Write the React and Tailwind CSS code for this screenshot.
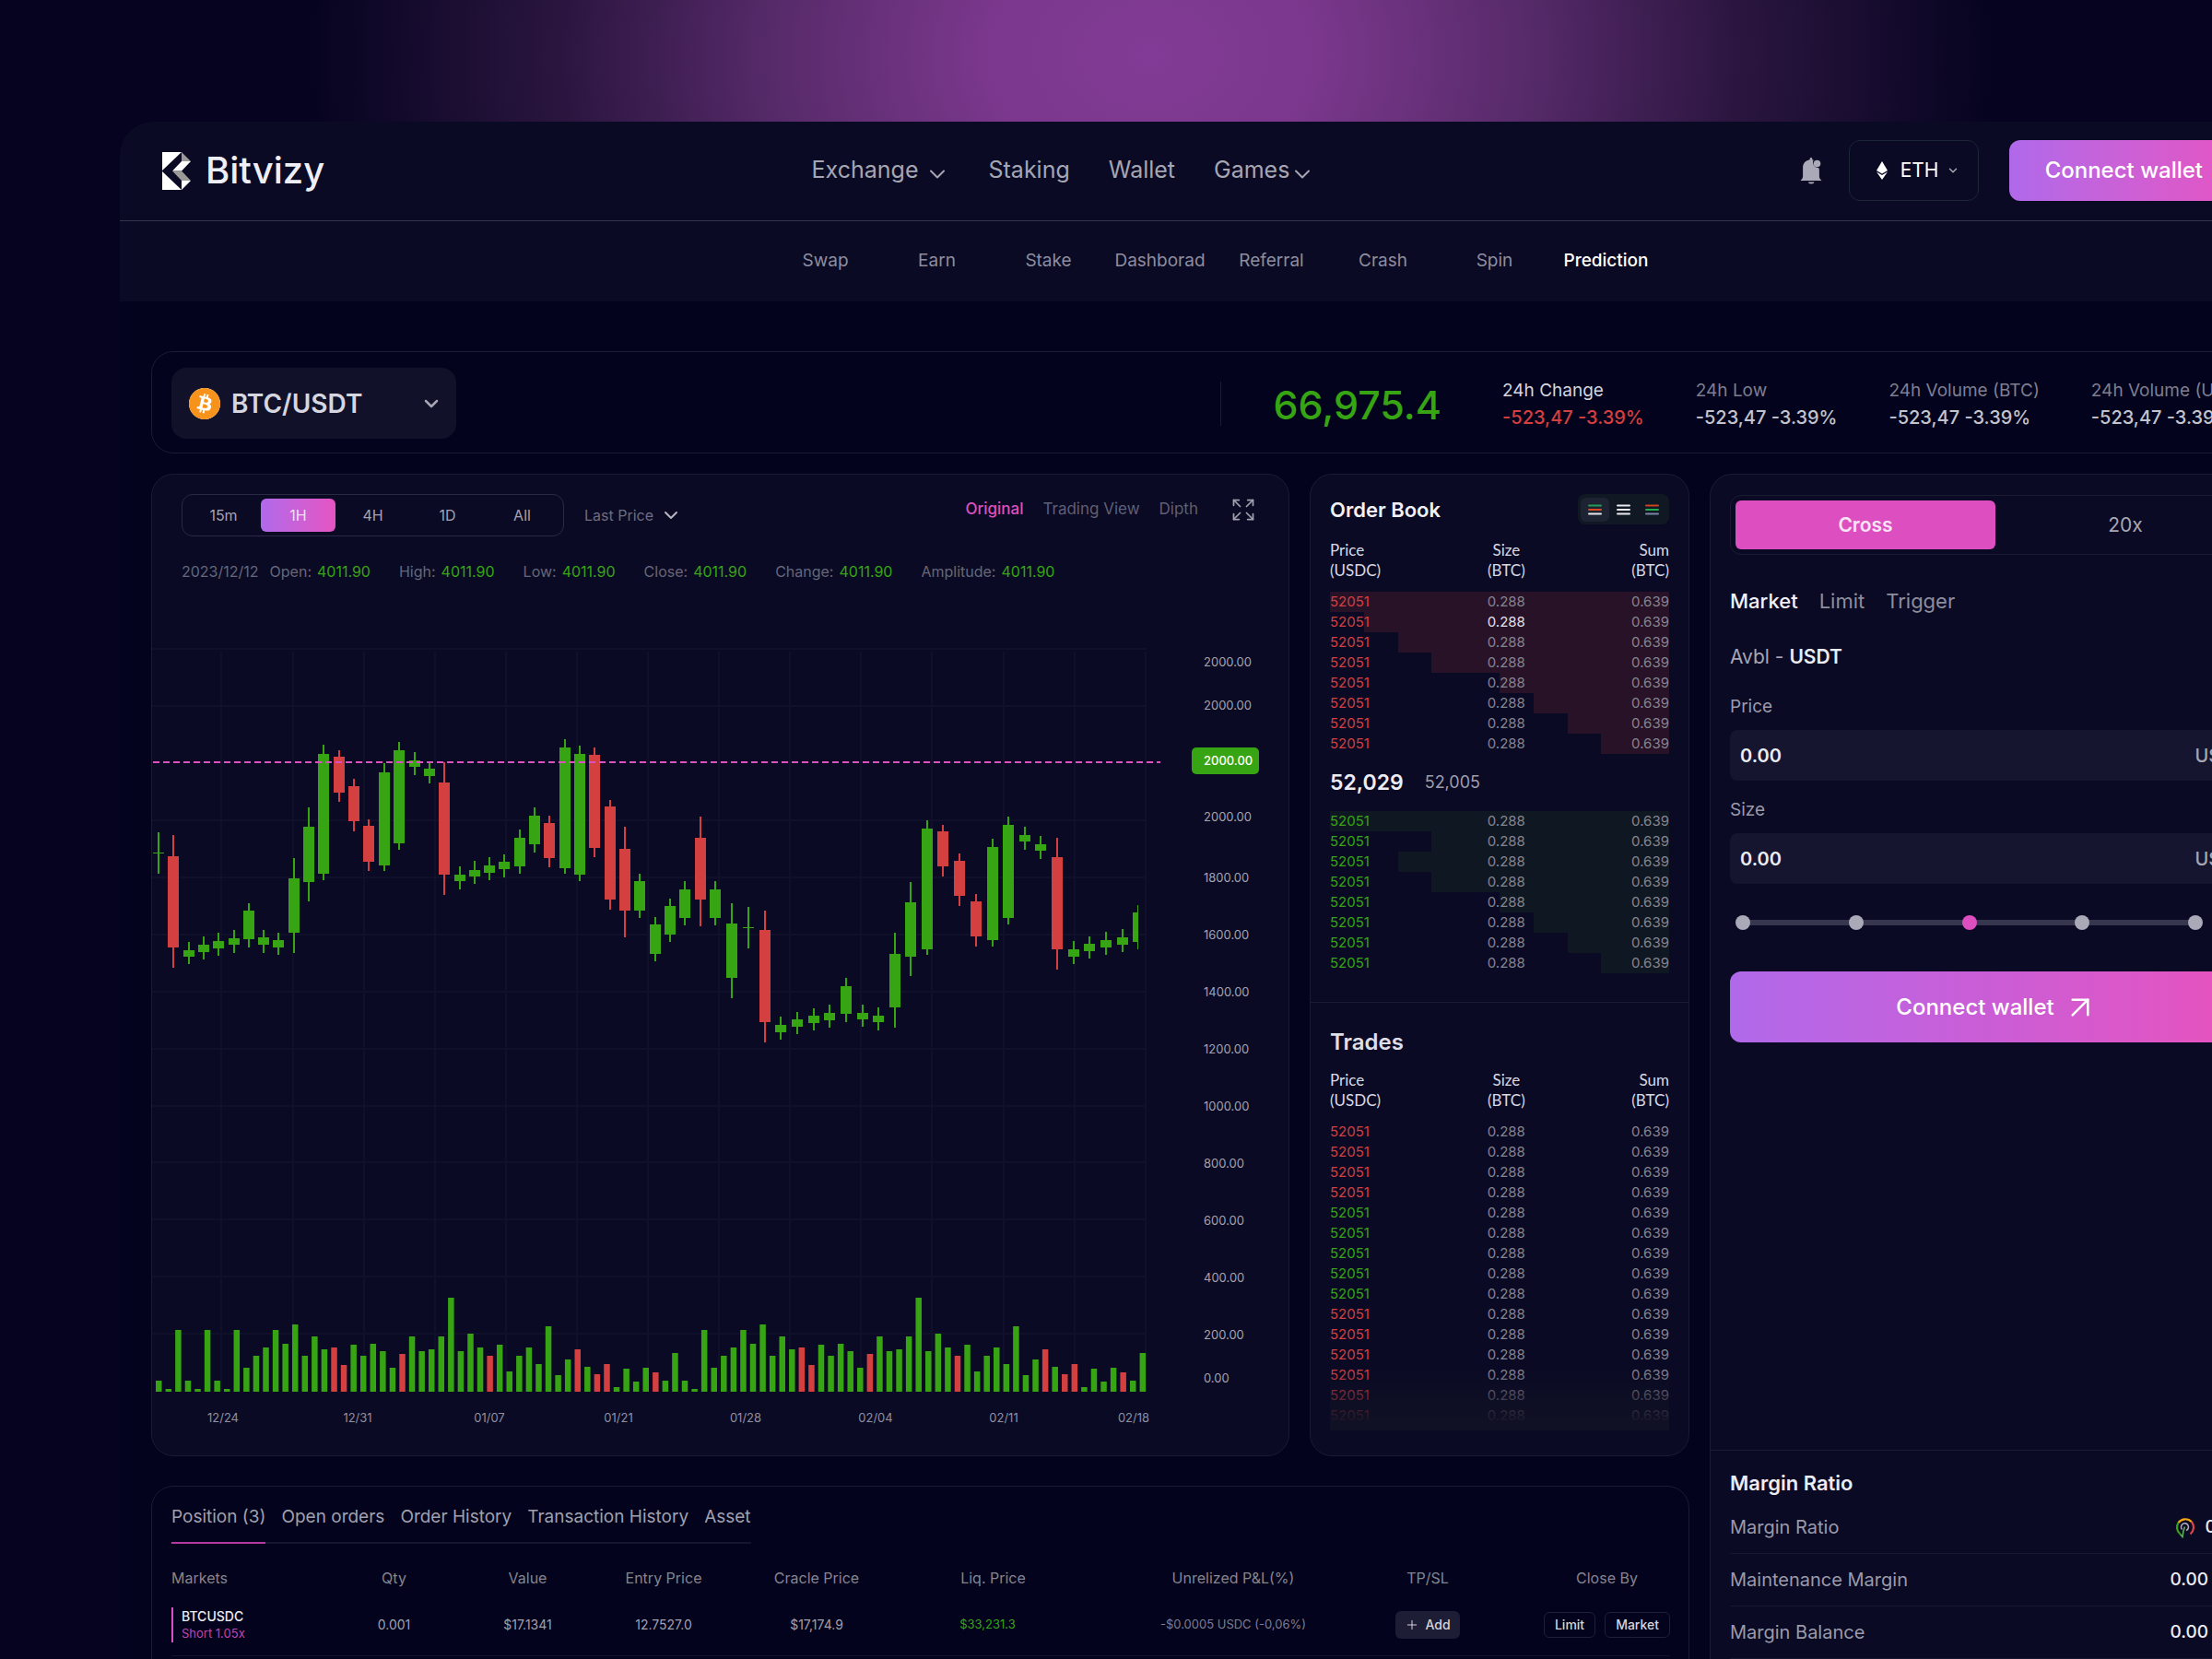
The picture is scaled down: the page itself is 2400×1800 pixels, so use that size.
import { ArrowUpRight, ChevronDown, Expand, Plus } from "lucide-react";
import { SiBitcoin } from "react-icons/si";

const UP = "#37a513";
const DOWN = "#d43f3f";

// Each candle: [x, direction, high, bodyTop, bodyBottom, low]
const CANDLES = [
  [7, 1, 199, 221, 222, 244], [23, 0, 202, 225, 324, 346], [40, 1, 318, 327, 334, 342],
  [56, 1, 312, 321, 329, 337], [72, 1, 308, 317, 325, 333], [89, 1, 305, 314, 321, 330],
  [105, 1, 276, 284, 315, 324], [121, 1, 305, 313, 321, 330], [137, 1, 308, 316, 324, 332],
  [154, 1, 227, 249, 308, 330], [170, 1, 172, 193, 253, 274], [186, 1, 104, 114, 244, 251],
  [203, 0, 110, 117, 156, 166], [219, 0, 141, 149, 187, 198], [235, 0, 185, 192, 231, 241],
  [252, 1, 124, 134, 235, 241], [268, 1, 101, 110, 211, 218], [285, 1, 112, 121, 128, 137],
  [301, 1, 123, 130, 138, 146], [317, 0, 123, 145, 245, 267], [334, 1, 236, 245, 252, 261],
  [350, 1, 230, 240, 247, 255], [366, 1, 226, 235, 243, 251], [382, 1, 223, 231, 239, 248],
  [399, 1, 196, 205, 236, 244], [415, 1, 172, 181, 212, 221], [431, 0, 181, 189, 227, 237],
  [448, 1, 98, 107, 238, 244], [464, 1, 105, 114, 245, 252], [480, 0, 107, 115, 216, 226],
  [497, 0, 164, 171, 272, 283], [513, 0, 193, 217, 284, 313], [529, 1, 244, 252, 284, 292],
  [546, 1, 291, 299, 331, 339], [562, 1, 271, 279, 310, 318], [578, 1, 252, 261, 292, 300],
  [595, 0, 182, 205, 272, 301], [611, 1, 252, 261, 292, 300], [629, 1, 276, 298, 357, 379],
  [647, 1, 280, 302, 303, 325], [665, 0, 284, 305, 405, 427], [682, 1, 399, 408, 416, 424],
  [700, 1, 394, 402, 410, 418], [718, 1, 390, 398, 406, 414], [735, 1, 386, 395, 403, 411],
  [753, 1, 357, 366, 396, 405], [771, 1, 386, 395, 402, 410], [788, 1, 389, 398, 405, 414],
  [806, 1, 308, 331, 389, 411], [823, 1, 253, 275, 334, 355], [841, 1, 186, 195, 326, 332],
  [858, 0, 191, 198, 236, 247], [876, 0, 222, 230, 268, 279], [894, 0, 266, 274, 312, 323],
  [912, 1, 206, 215, 316, 323], [929, 1, 182, 191, 292, 299], [947, 1, 193, 202, 209, 218],
  [964, 1, 203, 212, 219, 228], [982, 0, 205, 226, 326, 348], [1000, 1, 317, 326, 334, 342],
  [1017, 1, 312, 320, 328, 336], [1035, 1, 307, 316, 324, 332], [1053, 1, 304, 313, 321, 329],
  [1070, 1, 278, 286, 318, 326],
];

const VOLUMES = [
  12, 3, 67, 12, 3, 67, 12, 3, 67, 26, 39, 48, 67, 52, 73, 39, 60, 46, 48, 29, 51, 39, 52, 44, 26,
  41, 60, 44, 46, 60, 102, 44, 63, 48, 39, 51, 22, 39, 48, 30, 71, 18, 35, 46, 27, 19, 30, 5, 25, 11,
  26, 21, 12, 42, 12, 3, 67, 26, 39, 48, 67, 52, 73, 39, 60, 46, 48, 29, 51, 39, 52, 44, 26, 41, 60,
  44, 46, 60, 102, 44, 63, 48, 39, 51, 22, 39, 48, 30, 71, 18, 35, 46, 27, 19, 30, 5, 25, 11, 26, 21,
  12, 42,
];
const DOWN_VOLUMES = new Set([18, 19, 25, 34, 43, 45, 46, 51, 66, 67, 73, 82, 91, 93, 94, 99]);

const GRID_X = [75, 153, 230, 307, 384, 461, 538, 615, 692, 769, 846, 924, 1001, 1078];
const GRID_Y = [0, 62, 186, 248, 310, 372, 434, 496, 557, 619, 681, 743];

const PRICE_LABELS = [
  [14, "2000.00"], [61, "2000.00"], [182, "2000.00"], [248, "1800.00"], [310, "1600.00"],
  [372, "1400.00"], [434, "1200.00"], [496, "1000.00"], [558, "800.00"], [620, "600.00"],
  [682, "400.00"], [744, "200.00"], [791, "0.00"],
];
const DATE_LABELS = [
  [77, "12/24"], [223, "12/31"], [366, "01/07"], [506, "01/21"], [644, "01/28"],
  [785, "02/04"], [924, "02/11"], [1065, "02/18"],
];

const BOOK_HEAD = [["Price", "(USDC)"], ["Size", "(BTC)"], ["Sum", "(BTC)"]];
const ASKS = [100, 90, 80, 70, 50, 40, 30, 20];
const BIDS = [100, 70, 80, 70, 50, 40, 30, 20];
const TRADES = [0, 0, 0, 0, 1, 1, 1, 1, 1, 0, 0, 0, 0, 0, 0];

const PANEL = "rounded-3xl border border-[#1b1b34]";

function Logo() {
  return (
    <a href="#home" className="flex items-center gap-4">
      <svg width="31" height="41" viewBox="0 0 31 41" aria-hidden="true">
        <path d="M0 0H21L0 20Z M0 21L21 41H0Z M21 10H31L21 20.500H11Z M21 31H31L21 41Z" fill="#fff" />
        <path d="M21 0L31 10H21Z M11 20.500H21L31 31H21Z" fill="#9c9a98" />
      </svg>
      <span className="text-[40px] leading-[48px] font-medium text-[#eeeef6]">Bitvizy</span>
    </a>
  );
}

function BellIcon() {
  return (
    <svg width="24" height="29" viewBox="0 0 24 29" aria-hidden="true">
      <path
        d="M12 0c.8 0 1.300.6 1.300 1.400v.8c.5.1.9.2 1.300.4a5.600 5.600 0 0 0 5.600 8.300c.5 1 .7 2 .7 3.100v6.500c0 1.500.8 2.700 2.600 4.500H.5c1.700-1.800 2.600-3 2.600-4.500V10.500c0-4.200 3.200-7.600 7.500-8.300v-.8C10.600.6 11.200 0 12 0Z"
        fill="#a9a9b8"
      />
      <circle cx="18.500" cy="6.500" r="3.800" fill="#a9a9b8" />
      <path d="M9 26.500h6.400c0 1.300-1 2-3.200 2S9 27.800 9 26.500Z" fill="#a9a9b8" />
    </svg>
  );
}

function EthIcon() {
  return (
    <svg width="12" height="20" viewBox="0 0 12 20" aria-hidden="true">
      <path d="M6 0l6 10L6 13.400 0 10Z" fill="#fff" />
      <path d="M0 11.600L6 15l6-3.400L6 20Z" fill="#fff" />
    </svg>
  );
}

function GaugeIcon() {
  return (
    <svg width="24" height="24" viewBox="0 0 24 24" fill="none" strokeWidth="2.200" aria-hidden="true">
      <path d="M6.500 19.500A9.500 9.500 0 0 1 4.500 7" stroke="#37a513" />
      <path d="M4.500 7a9.500 9.500 0 0 1 14.500-.7" stroke="#f7a512" />
      <path d="M19 6.300a9.500 9.500 0 0 1-1.500 13.200" stroke="#e0434f" />
      <path d="M8.500 14.500a4 4 0 1 1 4.500 1" stroke="#a9a9b8" strokeWidth="1.600" />
      <path d="M6.500 19.500l2.500 3 1-6.500 1.500-4.500" stroke="#5fae5f" strokeWidth="1.600" />
    </svg>
  );
}

function Header() {
  return (
    <header className="flex h-[108px] items-center border-b border-[#34344d] bg-[#0a0a24] pr-[79px] pb-px pl-[46px]">
      <div className="flex-1">
        <Logo />
      </div>
      <nav className="flex items-center gap-[42px] pr-[297px] text-[25px] text-[#a6a6b2]">
        <button className="flex items-center gap-1.5">
          Exchange
          <ChevronDown className="mt-2 size-7" strokeWidth={1.700} />
        </button>
        <a href="#staking">Staking</a>
        <a href="#wallet">Wallet</a>
        <button className="flex items-center">
          Games
          <ChevronDown className="mt-2 size-7" strokeWidth={1.700} />
        </button>
      </nav>
      <div className="flex flex-1 items-center justify-end">
        <button aria-label="Notifications" className="mr-[29px]">
          <BellIcon />
        </button>
        <label className="mr-[33px] flex h-[66px] items-center rounded-xl border border-[#1c2636] pr-5 pl-[29px] text-white">
          <EthIcon />
          <select aria-label="Network" className="ml-3.5 appearance-none bg-transparent text-[21px] outline-none">
            <option>ETH</option>
          </select>
          <ChevronDown className="ml-2 size-3.5 text-[#a6a6b2]" strokeWidth={2.5} />
        </label>
        <button className="h-[66px] rounded-xl bg-gradient-to-r from-[#b069ea] to-[#e553c2] px-[39px] text-2xl font-medium whitespace-nowrap text-white">
          Connect wallet
        </button>
      </div>
    </header>
  );
}

function SubNav() {
  const items = ["Swap", "Earn", "Stake", "Dashborad", "Referral", "Crash", "Spin", "Prediction"];
  return (
    <nav className="flex h-[87px] items-center justify-center bg-[#0a0a24] pb-px text-[19px]">
      {items.map((item) => (
        <a
          key={item}
          href={`#${item.toLowerCase()}`}
          className={`w-[121px] text-center ${item === "Prediction" ? "font-medium text-white" : "text-[#8d8d9f]"}`}
        >
          {item}
        </a>
      ))}
    </nav>
  );
}

function Stat({ label, labelClass, valueClass }) {
  return (
    <div className="whitespace-nowrap">
      <p className={`text-[19px] leading-[30px] ${labelClass}`}>{label}</p>
      <p className={`text-xl leading-7 font-medium ${valueClass}`}>-523,47 -3.39%</p>
    </div>
  );
}

function Ticker() {
  return (
    <section className={`${PANEL} mt-[54px] flex h-[111px] items-center justify-between pt-0.5 pr-[27px] pl-[21px]`}>
      <label className="flex h-[77px] w-[309px] items-center rounded-2xl bg-[#111129] pr-[15px] pl-[19px]">
        <span className="rounded-full bg-white">
          <SiBitcoin className="size-[34px] text-[#f7931a]" />
        </span>
        <select
          aria-label="Trading pair"
          className="ml-3 flex-1 appearance-none bg-transparent text-[28px] font-semibold text-[#d6d6e0] outline-none"
        >
          <option>BTC/USDT</option>
        </select>
        <ChevronDown className="size-6 text-[#a6a6b2]" strokeWidth={2.5} />
      </label>
      <div className="flex items-center gap-14">
        <div className="mr-2.5 flex items-center gap-14">
          <div className="h-12 w-px bg-[#1b1b34]" />
          <p className="pt-0.5 text-[43px] leading-[50px] font-medium text-[#37a513]">66,975.4</p>
        </div>
        <Stat label="24h Change" labelClass="text-[#d5d5de]" valueClass="text-[#d43f3f]" />
        <Stat label="24h Low" labelClass="text-[#7e7e90]" valueClass="text-[#c3c3cd]" />
        <Stat label="24h Volume (BTC)" labelClass="text-[#7e7e90]" valueClass="text-[#c3c3cd]" />
        <Stat label="24h Volume (USDT)" labelClass="text-[#7e7e90]" valueClass="text-[#c3c3cd]" />
      </div>
    </section>
  );
}

function Chart() {
  return (
    <svg viewBox="0 0 1233 860" className="mt-[68px] block h-auto w-full" role="img" aria-label="BTC/USDT price and volume">
      <g transform="translate(0 4)">
        <g stroke="#10102a" strokeWidth="2">
          {GRID_Y.map((y) => (
            <line key={y} x1="0" x2="1079" y1={y} y2={y} />
          ))}
          {GRID_X.map((x) => (
            <line key={x} x1={x} x2={x} y1="3" y2="806" />
          ))}
        </g>
        {CANDLES.map(([x, up, high, top, bottom, low], i) => {
          // The newest candle is cut in half by the edge of the plot.
          const last = i === CANDLES.length - 1;
          return (
            <g key={x} fill={up ? UP : DOWN}>
              <rect x={x - 1} y={high} width={last ? 1 : 2} height={low - high} />
              <rect x={x - 6} y={top} width={last ? 6 : 12} height={bottom - top} />
            </g>
          );
        })}
        {VOLUMES.map((h, i) => (
          <rect
            key={i}
            x={4 + i * 10.570}
            y={806 - h}
            width="6.500"
            height={h}
            fill={DOWN_VOLUMES.has(i) ? DOWN : UP}
          />
        ))}
        <line x1="1" x2="1094" y1="123" y2="123" stroke="#dd50c0" strokeWidth="2" strokeDasharray="7 4" />
        <g fontSize="13" fill="#a3a3b1">
          {PRICE_LABELS.map(([y, text]) => (
            <text key={y} x="1141" y={y + 5}>
              {text}
            </text>
          ))}
        </g>
        <rect x="1128" y="107" width="73" height="29" rx="5" fill={UP} />
        <text x="1141" y="126" fontSize="13" fontWeight="500" fill="#fff">
          2000.00
        </text>
        <g fontSize="13" fill="#8f8fa0" textAnchor="middle">
          {DATE_LABELS.map(([x, text]) => (
            <text key={x} x={x} y="839">
              {text}
            </text>
          ))}
        </g>
      </g>
    </svg>
  );
}

function ChartPanel() {
  return (
    <section className={`${PANEL} bg-[#0a0a24] pt-[21px]`}>
      <div className="flex items-start justify-between pr-[35px] pl-8">
        <div className="flex items-center gap-[22px]">
          <div className="flex rounded-xl border border-[#2a2a45] p-1">
            {["15m", "1H", "4H", "1D", "All"].map((t) => (
              <button
                key={t}
                className={`h-9 w-[81px] rounded-md text-base ${
                  t === "1H"
                    ? "bg-gradient-to-r from-[#b069ea] to-[#e553c2] text-[#f2dcf6]"
                    : "text-[#a3a3b3]"
                }`}
              >
                {t}
              </button>
            ))}
          </div>
          <label className="flex items-center gap-1.5 text-[#6d6d83]">
            <select aria-label="Price type" className="appearance-none bg-transparent text-base outline-none">
              <option>Last Price</option>
            </select>
            <ChevronDown className="size-6 text-[#b6b6c2]" strokeWidth={2} />
          </label>
        </div>
        <div className="flex h-[34px] items-center gap-[21px] text-[17px] text-[#5f5f75]">
          <button className="font-medium text-[#dd50c0]">Original</button>
          <button>Trading View</button>
          <button>Dipth</button>
          <button aria-label="Full screen" className="ml-3.5">
            <Expand className="size-7 text-[#a0a0ae]" strokeWidth={1.500} />
          </button>
        </div>
      </div>
      <dl className="mt-[26px] flex pl-8 text-base leading-6 text-[#66667b]">
        <dt className="mr-3">2023/12/12</dt>
        {["Open:", "High:", "Low:", "Close:", "Change:", "Amplitude:"].map((k) => (
          <div key={k} className="mr-[31px] flex gap-1.5">
            <dt>{k}</dt>
            <dd className="text-[#37a513]">4011.90</dd>
          </div>
        ))}
      </dl>
      <Chart />
      <div className="h-4" />
    </section>
  );
}

function BookCols() {
  return (
    <colgroup>
      <col className="w-[35%]" />
      <col className="w-[34%]" />
      <col className="w-[31%]" />
    </colgroup>
  );
}

function BookHead() {
  const align = ["text-left", "text-center", "text-right"];
  return (
    <thead>
      <tr>
        {BOOK_HEAD.map(([a, b], i) => (
          <th key={a} className={`pb-3 font-['Lato',sans-serif] text-[17px] leading-[22px] font-normal text-[#d9d9e2] ${align[i]}`}>
            {a}
            <br />
            {b}
          </th>
        ))}
      </tr>
    </thead>
  );
}

function BookRow({ up, depth = 0, bright }) {
  const fill = up ? "#0f1822" : "#281228";
  return (
    <tr
      className="h-[22px]"
      style={{ backgroundImage: `linear-gradient(to left, ${fill} ${depth}%, transparent ${depth}%)` }}
    >
      <td className={`text-left ${up ? "text-[#37a513]" : "text-[#d43f3f]"}`}>52051</td>
      <td className={`text-center ${bright ? "text-[#e2e2ea]" : ""}`}>0.288</td>
      <td className="text-right">0.639</td>
    </tr>
  );
}

const BOOK_TABLE = "w-full table-fixed text-[15px] leading-[22px] text-[#85858f]";

function BookViewButton({ label, active, a, b, c }) {
  return (
    <button
      aria-label={label}
      className={`flex h-[26px] w-[31px] items-center justify-center rounded-md ${active ? "bg-[#1d2333]" : ""}`}
    >
      <svg width="15" height="12" viewBox="0 0 15 12" strokeWidth="2" strokeLinecap="round" aria-hidden="true">
        <path d="M1 1.500H14" stroke={a} />
        <path d="M1 6H14" stroke={b} />
        <path d="M1 10.500H14" stroke={c} />
      </svg>
    </button>
  );
}

function OrderBook() {
  return (
    <section className={`${PANEL} bg-[#0a0a24] pt-[21px]`}>
      <div className="px-[21px]">
        <div className="flex h-[33px] items-center justify-between">
          <h2 className="text-[22px] leading-7 font-semibold text-[#f1f1f7]">Order Book</h2>
          <div className="flex h-[33px] items-center rounded-lg bg-[#101824] px-[3px]">
            <BookViewButton label="Bids and asks" active a="#1f9d57" b="#d9481f" c="#e8e8ee" />
            <BookViewButton label="Plain" a="#e8e8ee" b="#e8e8ee" c="#e8e8ee" />
            <BookViewButton label="Asks first" a="#c9441f" b="#1fae4b" c="#7b86a3" />
          </div>
        </div>
        <table className={`${BOOK_TABLE} mt-[17px]`}>
          <BookCols />
          <BookHead />
          <tbody>
            {ASKS.map((d, i) => (
              <BookRow key={i} depth={d} bright={i === 1} />
            ))}
          </tbody>
        </table>
        <p className="flex h-[62px] items-center gap-[23px] text-[23px] font-semibold text-[#ececf4]">
          52,029 <span className="text-lg font-normal text-[#9c9cab]">52,005</span>
        </p>
        <table className={BOOK_TABLE} aria-label="Bids">
          <BookCols />
          <tbody>
            {BIDS.map((d, i) => (
              <BookRow key={i} up depth={d} />
            ))}
          </tbody>
        </table>
      </div>
      <div className="mt-[31px] border-t border-[#1b1b34] px-[21px] pt-[29px]">
        <h2 className="text-2xl leading-7 font-semibold text-[#dedee8]">Trades</h2>
        <div className="relative mt-4 pb-[5px]">
          <table className={BOOK_TABLE}>
            <BookCols />
            <BookHead />
            <tbody>
              {TRADES.map((up, i) => (
                <BookRow key={i} up={up === 1} />
              ))}
            </tbody>
          </table>
          <div className="absolute inset-x-0 bottom-0 h-[66px] bg-gradient-to-b from-transparent via-[#101024]/60 via-50% to-[#111125] to-90%" />
        </div>
      </div>
    </section>
  );
}

function AmountField({ id, label, className }) {
  return (
    <div className={className}>
      <label htmlFor={id} className="block text-[19px] leading-6 text-[#9a9aaa]">
        {label}
      </label>
      <div className="mt-[13px] flex h-[55px] items-center rounded-lg bg-[#151530] pr-[17px] pl-[11px] text-xl font-medium">
        <input id={id} defaultValue="0.00" className="min-w-0 flex-1 bg-transparent font-semibold text-[#ececf4] outline-none" />
        <span className="text-[#a6a6b4]">USDT</span>
      </div>
    </div>
  );
}

function MarginRow({ label, children }) {
  return (
    <div className="flex h-[57px] items-center justify-between border-b border-[#17172f]">
      <dt className="text-xl text-[#9a9aaa]">{label}</dt>
      <dd className="flex items-center gap-2.5 text-[19px] font-medium text-[#ececf4]">{children}</dd>
    </div>
  );
}

function TradePanel() {
  return (
    <section className={`${PANEL} row-span-2 bg-[#0a0a24]`}>
      <div className="min-h-[1058px] px-[21px] pt-[22px]">
        <div className="flex h-[65px] rounded-xl border border-[#1b1b34] p-[5px] text-[21px]">
          <button className="flex-1 rounded-md bg-[#dd4ec0] font-semibold text-[#f6e3f5]">Cross</button>
          <button className="flex-1 text-[#a6a6b4]">20x</button>
        </div>
        <div className="mt-9 flex gap-[23px] text-[22px] leading-7 text-[#8d8d9f]">
          <button className="font-medium text-[#f1f1f7]">Market</button>
          <button>Limit</button>
          <button>Trigger</button>
        </div>
        <p className="mt-[33px] text-[21px] leading-7 text-[#a6a6b4]">
          Avbl - <span className="font-semibold text-[#ececf4]">USDT</span>
        </p>
        <AmountField id="price" label="Price" className="mt-7" />
        <AmountField id="size" label="Size" className="mt-5" />
        <div className="relative mt-[34px] mr-[63px] ml-1.5 flex h-4 items-center justify-between">
          <div className="absolute inset-x-2 h-1.5 bg-[#36364f]" />
          {[0, 25, 50, 75, 100].map((v) => (
            <span key={v} className={`relative size-4 rounded-full ${v === 50 ? "bg-[#dd4ec0]" : "bg-[#a9a9b8]"}`} />
          ))}
          <input
            type="range"
            aria-label="Order size percent"
            defaultValue="50"
            step="25"
            className="absolute inset-0 w-full opacity-0"
          />
        </div>
        <button className="mt-[45px] flex h-[77px] w-full items-center justify-center gap-2 rounded-xl bg-gradient-to-r from-[#b069ea] via-[#cb5dd6] to-[#ea50bb] pl-1 text-2xl font-medium text-white">
          Connect wallet
          <ArrowUpRight className="size-10" strokeWidth={1.500} />
        </button>
      </div>
      <div className="border-t border-[#1b1b34] px-[21px] pt-[21px] pb-6">
        <h2 className="text-[22px] leading-7 font-semibold text-[#ececf4]">Margin Ratio</h2>
        <dl className="mt-1.5">
          <MarginRow label="Margin Ratio">
            <GaugeIcon />
            0.00%
          </MarginRow>
          <MarginRow label="Maintenance Margin">0.00 USDT</MarginRow>
          <MarginRow label="Margin Balance">0.00 USDT</MarginRow>
        </dl>
      </div>
    </section>
  );
}

function Positions() {
  const heads = ["Qty", "Value", "Entry Price", "Cracle Price", "Liq. Price", "Unrelized P&L(%)", "TP/SL"];
  const small = "h-7 rounded-md border border-[#1f1f38] px-[11px] text-sm font-medium text-[#d5d5de]";
  return (
    <section className={`${PANEL} col-span-2 mt-[10px] px-[21px] pt-[19px] pb-6`}>
      <div className="inline-flex gap-[17px] border-b-2 border-[#15152e] text-[19px] leading-7 text-[#a0a0ae]">
        {["Position (3)", "Open orders", "Order History", "Transaction History", "Asset"].map((t, i) => (
          <button key={t} className={`pb-[13px] ${i === 0 ? "-mb-[2px] border-b-2 border-[#b53aa0]" : ""}`}>
            {t}
          </button>
        ))}
      </div>
      <table className="mt-5 w-full table-fixed">
        <colgroup>
          <col className="w-[169px]" />
          <col className="w-[145px]" />
          <col className="w-[145px]" />
          <col className="w-[150px]" />
          <col className="w-[182px]" />
          <col className="w-[201px]" />
          <col className="w-[320px]" />
          <col className="w-[102px]" />
          <col className="w-[212px]" />
        </colgroup>
        <thead>
          <tr className="h-[34px] text-base text-[#85858f]">
            <th className="text-left font-normal">Markets</th>
            {heads.map((h) => (
              <th key={h} className="font-normal">
                {h}
              </th>
            ))}
            <th className="pl-[75px] font-normal">Close By</th>
          </tr>
        </thead>
        <tbody>
          <tr className="h-[67px] border-b border-[#13132b] text-center text-sm text-[#a0a0ae]">
            <td className="text-left">
              <div className="border-l-2 border-[#dd4ec0] pl-[9px] leading-[19px]">
                <p className="font-medium text-[#ececf4]">BTCUSDC</p>
                <p className="text-[13px] text-[#c445ad]">Short 1.05x</p>
              </div>
            </td>
            <td>0.001</td>
            <td>$17.1341</td>
            <td>12.7527.0</td>
            <td>$17,174.9</td>
            <td className="pr-3 text-[13px] text-[#37a513]">$33,231.3</td>
            <td className="text-[13px] text-[#7e7e90]">-$0.0005 USDC (-0,06%)</td>
            <td>
              <button className="inline-flex h-[30px] items-center gap-1.5 rounded-md bg-[#1d1d36] px-2.5 font-medium text-[#d5d5de]">
                <Plus className="size-4" strokeWidth={1.500} />
                Add
              </button>
            </td>
            <td>
              <div className="flex justify-end gap-2.5">
                <button className={small}>Limit</button>
                <button className={small}>Market</button>
              </div>
            </td>
          </tr>
        </tbody>
      </table>
    </section>
  );
}

export default function App() {
  return (
    <div className="h-screen overflow-hidden bg-[#05031f] bg-[radial-gradient(920px_700px_at_52%_60px,#823b96_0%,#7a378c_20%,#562a69_45%,#2a153f_70%,#05031f_100%)] pt-[132px] font-['Inter',sans-serif]">
      <div className="-mr-[108px] ml-[130px] min-h-screen overflow-hidden rounded-tl-[36px] bg-[#03031d]">
        <Header />
        <SubNav />
        <main className="px-[33px] pb-8 pl-[34px]">
          <Ticker />
          <div className="mt-[22px] grid grid-cols-[1235fr_412fr_620fr] gap-[22px]">
            <ChartPanel />
            <OrderBook />
            <TradePanel />
            <Positions />
          </div>
        </main>
      </div>
    </div>
  );
}
